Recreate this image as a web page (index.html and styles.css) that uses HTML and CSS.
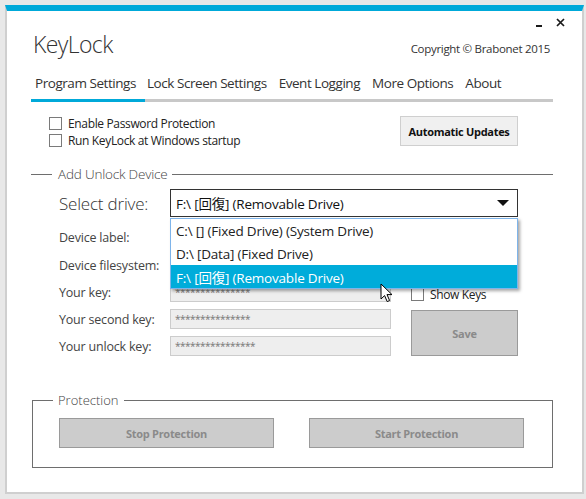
FILE: index.html
```html
<!DOCTYPE html>
<html>
<head>
<meta charset="utf-8">
<link rel="stylesheet" href="styles.css">
</head>
<body>
<div class="window">
  <div class="controls">
    <span class="ctl-min"></span>
    <svg class="ctl-close" width="9" height="9" viewBox="0 0 9 9"><path d="M1 1L8 8M8 1L1 8" stroke="#1a1a1a" stroke-width="1.7"/></svg>
  </div>
  <div class="brand">
    <span class="title">KeyLock</span>
    <span class="copyright">Copyright © Brabonet 2015</span>
  </div>
  <nav class="tabs">
    <span class="tab">Program Settings</span>
    <span class="tab">Lock Screen Settings</span>
    <span class="tab">Event Logging</span>
    <span class="tab">More Options</span>
    <span class="tab">About</span>
  </nav>
  <div class="tabline"><div class="tabline-active"></div></div>

  <div class="options">
    <div class="checks">
      <div class="check"><span class="box"></span><span>Enable Password Protection</span></div>
      <div class="check"><span class="box"></span><span>Run KeyLock at Windows startup</span></div>
    </div>
    <div class="btn btn-updates">Automatic Updates</div>
  </div>

  <div class="group-head">
    <span class="rule rule-short"></span>
    <span class="group-title">Add Unlock Device</span>
    <span class="rule rule-long"></span>
  </div>

  <div class="form">
    <div class="lbl lbl-big">Select drive:</div>
    <div class="combo-wrap">
      <div class="combo">
        <span>F:\ [回復] (Removable Drive)</span>
        <svg class="arrow" width="12" height="6" viewBox="0 0 12 6"><path d="M0 0H12L6 6Z" fill="#111"/></svg>
      </div>
      <div class="dropdown">
        <div class="opt">C:\ [] (Fixed Drive) (System Drive)</div>
        <div class="opt">D:\ [Data] (Fixed Drive)</div>
        <div class="opt opt-sel">F:\ [回復] (Removable Drive)</div>
      </div>
      <svg class="cursor" width="14" height="20" viewBox="0 0 14 20"><path d="M1 1V16L4.6 12.6L7.2 18.6L9.6 17.5L7 11.6H12Z" fill="#fff" stroke="#000" stroke-width="1" stroke-linejoin="round"/></svg>
    </div>

    <div class="lbl row2">Device label:</div>
    <div class="lbl">Device filesystem:</div>

    <div class="lbl">Your key:</div>
    <div class="field">***************</div>
    <div class="check show-keys"><span class="box"></span><span>Show Keys</span></div>

    <div class="lbl">Your second key:</div>
    <div class="field">***************</div>
    <div class="btn btn-disabled btn-save">Save</div>

    <div class="lbl">Your unlock key:</div>
    <div class="field">****************</div>
  </div>

  <div class="protection">
    <div class="prot-legend">Protection</div>
    <div class="prot-buttons">
      <div class="btn btn-disabled btn-prot">Stop Protection</div>
      <div class="btn btn-disabled btn-prot">Start Protection</div>
    </div>
  </div>
</div>
</body>
</html>
```

FILE: styles.css
```css
html, body {
  margin: 0;
  padding: 0;
}
body {
  background: #e8e8e8;
  font-family: "Open Sans", "Noto Sans CJK JP", sans-serif;
  color: #333;
  width: 586px;
  height: 499px;
  overflow: hidden;
}
.window {
  margin: 5px 0 0 5px;
  width: 575px;
  height: 481px;
  background: #fff;
  border-top: 6px solid #00a9d9;
  border-left: 2px solid #cfcfcf;
  border-right: 2px solid #cfcfcf;
  border-bottom: 2px solid #cfcfcf;
  position: relative;
}
.controls {
  display: flex;
  justify-content: flex-end;
  align-items: flex-end;
  gap: 14px;
  padding: 7px 17px 0 0;
  height: 9px;
}
.ctl-min {
  width: 6px;
  height: 2px;
  background: #1a1a1a;
}
.ctl-close { display: block; }
.brand {
  display: flex;
  justify-content: space-between;
  align-items: baseline;
  padding: 0 32px 0 26px;
  margin-top: 2px;
  height: 32px;
}
.title {
  font-size: 23px;
  font-weight: 300;
  line-height: 30px;
  letter-spacing: -0.6px;
  color: #333;
}
.copyright {
  font-size: 11.5px;
  color: #333;
  letter-spacing: -0.3px;
}
.tabs {
  display: flex;
  margin: 10px 0 0 24px;
  height: 24px;
  align-items: center;
}
.tab {
  font-size: 13.5px;
  padding: 0 5px 0 4px;
  letter-spacing: -0.45px;
  color: #333;
}
.tab + .tab { padding-left: 6px; padding-right: 6px; }
.tabline {
  margin: 4px 29px 0 24px;
  height: 3px;
  background: #c8c8c8;
}
.tabline-active {
  width: 114px;
  height: 3px;
  background: #00a9d9;
}
.options {
  display: flex;
  justify-content: space-between;
  align-items: flex-start;
  padding: 14px 64px 0 42px;
  height: 36px;
}
.checks {
  display: flex;
  flex-direction: column;
  gap: 4px;
  padding-top: 1px;
}
.check {
  display: flex;
  align-items: center;
  gap: 6px;
  font-size: 12px;
  letter-spacing: -0.35px;
  line-height: 13px;
  color: #222;
}
.box {
  width: 11px;
  height: 11px;
  border: 1px solid #7a7a7a;
  background: #fff;
  flex: none;
}
.btn {
  display: flex;
  align-items: center;
  justify-content: center;
  font-size: 11px;
  font-weight: 700;
  letter-spacing: -0.3px;
  box-sizing: border-box;
}
.btn-updates {
  width: 118px;
  height: 30px;
  background: #f0f0f0;
  border: 1px solid #cfcfcf;
  color: #111;
}
.btn-disabled {
  background: #cccccc;
  border: 1px solid #9a9a9a;
  color: #8a8a8a;
}
.group-head {
  display: flex;
  align-items: center;
  margin: 14px 29px 0 24px;
  height: 16px;
}
.rule {
  height: 1px;
  background: #6e6e6e;
}
.rule-short { width: 21px; }
.rule-long { flex: 1; }
.group-title {
  font-size: 13.5px;
  font-weight: 300;
  color: #444;
  padding: 0 5px 0 6px;
  letter-spacing: -0.2px;
}
.form {
  display: grid;
  grid-template-columns: 91px 221px 107px;
  column-gap: 20px;
  grid-template-rows: 28px 24px 20px 20px 20px 20px;
  row-gap: 7px;
  margin: 7px 0 0 52px;
}
.lbl {
  grid-column: 1;
  font-size: 12.5px;
  color: #444;
  display: flex;
  align-items: center;
  letter-spacing: -0.2px;
  white-space: nowrap;
}
.lbl-big {
  font-size: 17px;
  font-weight: 300;
  color: #333;
}
.row2 { align-items: flex-end; line-height: 20px; }
.combo-wrap {
  grid-column: 2 / 4;
  position: relative;
}
.combo {
  box-sizing: border-box;
  height: 28px;
  border: 1px solid #333;
  display: flex;
  align-items: center;
  justify-content: space-between;
  padding: 0 8px 0 5px;
  font-size: 13.5px;
  color: #111;
  letter-spacing: -0.2px;
}
.arrow { display: block; }
.dropdown {
  position: absolute;
  left: 0;
  right: 0;
  top: 29px;
  box-sizing: border-box;
  border: 1px solid #7eb4ea;
  background: #fff;
  box-shadow: 2px 2px 3px rgba(0,0,0,0.35);
  z-index: 2;
}
.opt {
  height: 23px;
  display: flex;
  align-items: center;
  padding-left: 5px;
  font-size: 13.5px;
  color: #222;
  letter-spacing: -0.2px;
}
.opt-sel {
  background: #00acda;
  color: #fff;
}
.cursor {
  position: absolute;
  left: 210px;
  top: 94px;
  z-index: 3;
}
.field {
  grid-column: 2;
  box-sizing: border-box;
  background: #eeeeee;
  border: 1px solid #cccccc;
  font-size: 10px;
  color: #777;
  padding: 0 4px;
  display: flex;
  align-items: center;
  letter-spacing: -0.5px;
}
.show-keys {
  grid-column: 3;
  align-self: end;
  margin-bottom: 1px;
  font-size: 12px;
}
.btn-save {
  grid-column: 3;
  grid-row: 5 / 7;
  margin-top: 1px;
}
.protection {
  box-sizing: border-box;
  margin: 44px 29px 0 25px;
  height: 68px;
  border: 1px solid #6e6e6e;
  position: relative;
  padding: 17px 0 0 26px;
}
.prot-legend {
  position: absolute;
  top: -10px;
  left: 20px;
  background: #fff;
  padding: 0 5px;
  font-size: 13px;
  font-weight: 300;
  color: #444;
}
.prot-buttons {
  display: flex;
  gap: 35px;
}
.btn-prot {
  width: 215px;
  height: 30px;
}
```
